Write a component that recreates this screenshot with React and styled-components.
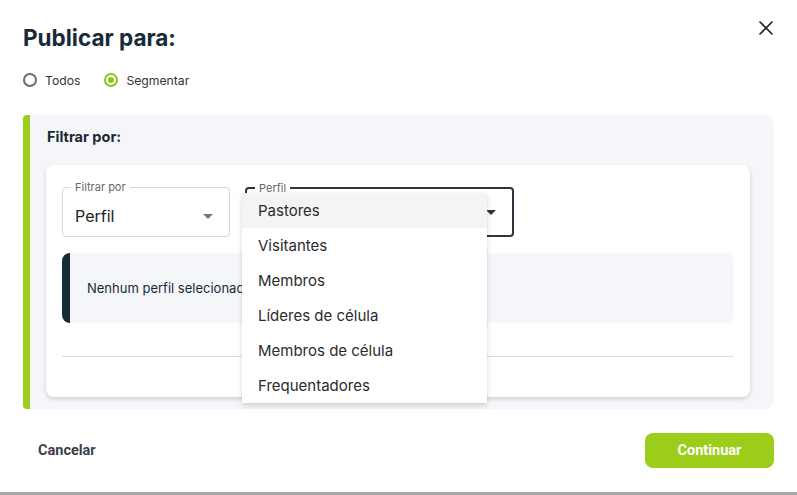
import React from "react";
import styled, { createGlobalStyle } from "styled-components";

const GlobalStyle = createGlobalStyle`
  html, body {
    margin: 0;
    padding: 0;
    background: #a7a7a7;
  }
  * {
    box-sizing: border-box;
  }
  body {
    font-family: "Inter", "Noto Sans", sans-serif;
    color: #1b2a36;
  }
`;

const green = "#9bcd1a";
const navy = "#172a37";

const options = [
  "Pastores",
  "Visitantes",
  "Membros",
  "Líderes de célula",
  "Membros de célula",
  "Frequentadores",
];

const App = () => {
  return (
    <>
      <GlobalStyle />
      <Modal>
        <CloseButton aria-label="Fechar">
          <svg width="14" height="14" viewBox="0 0 14 14">
            <path
              d="M1 1 L13 13 M13 1 L1 13"
              stroke="#222"
              strokeWidth="1.7"
              strokeLinecap="round"
            />
          </svg>
        </CloseButton>
        <Title>Publicar para:</Title>
        <RadioRow>
          <RadioOption>
            <Radio />
            Todos
          </RadioOption>
          <RadioOption>
            <Radio checked />
            Segmentar
          </RadioOption>
        </RadioRow>

        <Panel>
          <PanelTitle>Filtrar por:</PanelTitle>
          <Card>
            <SelectRow>
              <Select width={168}>
                <SelectLabel>Filtrar por</SelectLabel>
                <SelectValue>Perfil</SelectValue>
                <Caret top={216} />
              </Select>
              <Select width={269} focused>
                <SelectLabel>Perfil</SelectLabel>
                <Caret top={211} dark />
                <Menu>
                  {options.map((opt, i) => (
                    <MenuItem key={opt} active={i === 0}>
                      {opt}
                    </MenuItem>
                  ))}
                </Menu>
              </Select>
            </SelectRow>
            <InfoBox>Nenhum perfil selecionado</InfoBox>
            <Divider />
          </Card>
        </Panel>

        <Footer>
          <CancelButton>Cancelar</CancelButton>
          <ContinueButton>Continuar</ContinueButton>
        </Footer>
      </Modal>
    </>
  );
};

export default App;

const Modal = styled.div`
  position: relative;
  width: 797px;
  height: 492px;
  background: #fff;
  padding: 20px 23px 0 23px;
  display: flex;
  flex-direction: column;
`;

const CloseButton = styled.button`
  position: absolute;
  top: 21px;
  right: 24px;
  width: 14px;
  height: 14px;
  padding: 0;
  border: none;
  background: transparent;
  display: flex;
`;

const Title = styled.h1`
  margin: 0;
  font-size: 22.5px;
  line-height: 36px;
  font-weight: 700;
  color: ${navy};
`;

const RadioRow = styled.div`
  display: flex;
  gap: 24px;
  margin-top: 14px;
  height: 20px;
  align-items: center;
`;

const RadioOption = styled.label`
  display: flex;
  align-items: center;
  gap: 8px;
  font-size: 12.2px;
  color: #333;
`;

const Radio = styled.span`
  width: 14px;
  height: 14px;
  border-radius: 50%;
  border: 2px solid ${({ checked }) => (checked ? "#8cc61c" : "#6e6e6e")};
  display: flex;
  align-items: center;
  justify-content: center;
  &::after {
    content: "";
    width: 6px;
    height: 6px;
    border-radius: 50%;
    background: ${({ checked }) => (checked ? "#8cc61c" : "transparent")};
  }
`;

const Panel = styled.div`
  margin-top: 25px;
  height: 294px;
  background: #f5f6fa;
  border-left: 7px solid ${green};
  border-radius: 4px 9px 9px 4px;
  padding: 12px 24px 12px 16px;
  display: flex;
  flex-direction: column;
`;

const PanelTitle = styled.div`
  font-size: 14.5px;
  font-weight: 700;
  line-height: 20px;
  padding-left: 1px;
  color: ${navy};
`;

const Card = styled.div`
  margin-top: 18px;
  flex: 1;
  background: #fff;
  border-radius: 8px;
  box-shadow: 0 2px 4px rgba(30, 40, 60, 0.18);
  padding: 22px 16px 0 16px;
  display: flex;
  flex-direction: column;
`;

const SelectRow = styled.div`
  display: flex;
  gap: 15px;
`;

const Select = styled.div`
  position: relative;
  width: ${({ width }) => width}px;
  height: 50px;
  border-radius: 4px;
  border: ${({ focused }) =>
    focused ? "2px solid #2e3340" : "1px solid #d6d8dc"};
  padding: 0 12px;
  display: flex;
  align-items: center;
`;

const SelectLabel = styled.span`
  position: absolute;
  top: -7px;
  left: 8px;
  padding: 0 4px;
  background: #fff;
  font-size: 11px;
  line-height: 13px;
  color: #666;
`;

const SelectValue = styled.span`
  font-size: 16px;
  color: #222;
  margin-top: 8px;
`;

const Caret = styled.span`
  position: absolute;
  right: 16px;
  top: ${({ top }) => top - 190}px;
  width: 0;
  height: 0;
  border-left: 5px solid transparent;
  border-right: 5px solid transparent;
  border-top: 5px solid ${({ dark }) => (dark ? "#333" : "#777")};
`;

const Menu = styled.ul`
  position: absolute;
  top: 4px;
  left: -5px;
  width: 245px;
  margin: 0;
  padding: 0;
  list-style: none;
  background: #fff;
  border-radius: 3px;
  box-shadow: 0 3px 6px rgba(0, 0, 0, 0.12), 0 1px 3px rgba(0, 0, 0, 0.08);
  z-index: 10;
`;

const MenuItem = styled.li`
  height: 35px;
  padding-left: 16px;
  display: flex;
  align-items: center;
  font-size: 15px;
  color: #2b2b2b;
  background: ${({ active }) => (active ? "#f4f4f4" : "#fff")};
`;

const InfoBox = styled.div`
  margin-top: 16px;
  height: 70px;
  background: #f5f6fa;
  border-left: 8px solid ${navy};
  border-radius: 8px;
  padding-left: 17px;
  display: flex;
  align-items: center;
  font-size: 13px;
  color: ${navy};
`;

const Divider = styled.hr`
  margin: 33px 0 0 0;
  border: none;
  border-top: 1px solid #d7dce2;
`;

const Footer = styled.div`
  margin-top: 24px;
  display: flex;
  justify-content: space-between;
  align-items: center;
`;

const CancelButton = styled.button`
  border: none;
  background: transparent;
  padding: 0 15px;
  font-family: "Roboto", "Inter", sans-serif;
  font-size: 14.5px;
  font-weight: 700;
  color: #3a3f4b;
`;

const ContinueButton = styled.button`
  width: 129px;
  height: 35px;
  border: none;
  border-radius: 8px;
  background: ${green};
  color: #fff;
  font-family: "Roboto", "Inter", sans-serif;
  font-size: 14.5px;
  font-weight: 700;
`;
